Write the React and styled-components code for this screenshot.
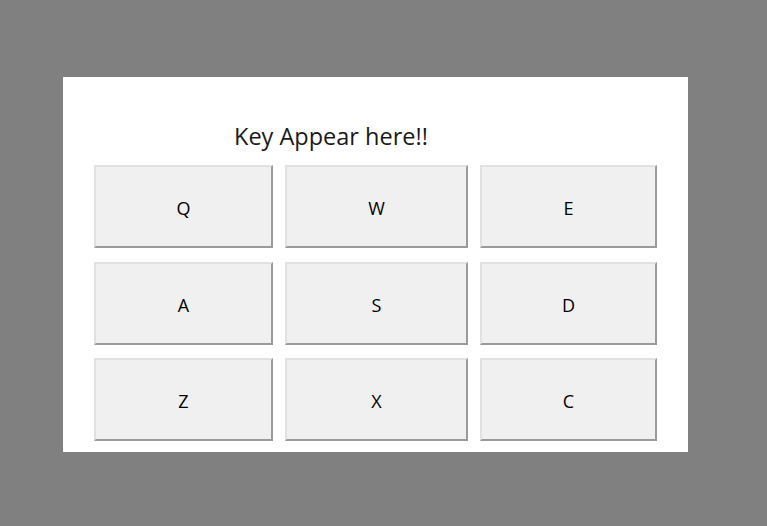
import styled, { createGlobalStyle } from 'styled-components';

const Global = createGlobalStyle`
  html, body {
    margin: 0;
    padding: 0;
    background: #808080;
    font-family: "Open Sans", "Noto Sans", sans-serif;
  }
`;

const Page = styled.div`
  width: 767px;
  height: 526px;
  padding: 77px 0 0 63px;
  box-sizing: border-box;
`;

const Panel = styled.div`
  width: 625px;
  height: 375px;
  background: #ffffff;
  box-sizing: border-box;
  padding: 40px 0 0 31px;
`;

const Title = styled.div`
  margin-left: 140px;
  height: 48px;
  font-size: 23.5px;
  line-height: 38px;
  color: #1a1a1a;
  white-space: nowrap;
`;

const Keys = styled.div`
  display: grid;
  grid-template-columns: 179px 183px 177px;
  grid-template-rows: 83px 83px 83px;
  column-gap: 12px;
  row-gap: 13.5px;
`;

const Key = styled.button`
  font-family: "Open Sans", "Noto Sans", sans-serif;
  font-size: 18px;
  color: #000;
  background: #f0f0f0;
  border-style: solid;
  border-width: 2px;
  border-color: #e1e1e1 #9a9a9a #9a9a9a #e1e1e1;
  padding: 3px 0 0;
  margin: 0;
  cursor: pointer;
`;

const rows = ['Q', 'W', 'E', 'A', 'S', 'D', 'Z', 'X', 'C'];

export default function App() {
  return (
    <Page>
      <Global />
      <Panel>
        <Title>Key Appear here!!</Title>
        <Keys>
          {rows.map((k) => (
            <Key key={k}>{k}</Key>
          ))}
        </Keys>
      </Panel>
    </Page>
  );
}
